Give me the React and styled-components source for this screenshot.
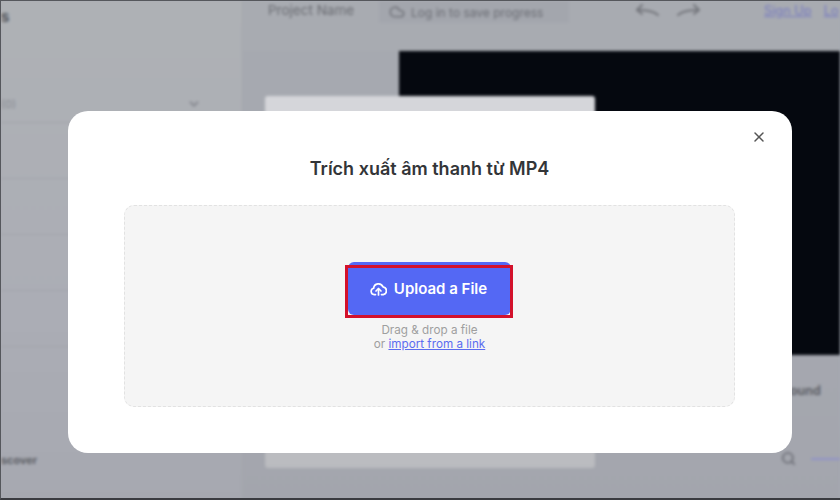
import React from 'react'
import styled, { createGlobalStyle } from 'styled-components'
import { ChevronDown, Cloud, Search, X } from 'lucide-react'

const GlobalStyle = createGlobalStyle`
  html, body { margin: 0; padding: 0; background: #000; }
  * { box-sizing: border-box; }
  body { font-family: Inter, "Liberation Sans", sans-serif; }
`

const Frame = styled.div`
  position: relative;
  width: 840px;
  height: 500px;
  overflow: hidden;
  background: #a7aab2;

  &::after {
    content: '';
    position: absolute;
    inset: 0;
    border-top: 1px solid #55575c;
    border-left: 1px solid #55575c;
    border-bottom: 2px solid #3a3b40;
    pointer-events: none;
  }
`

const Backdrop = styled.div`
  display: flex;
  width: 100%;
  height: 100%;
  filter: blur(1.4px);
`

const Sidebar = styled.aside`
  width: 243px;
  flex: none;
  display: flex;
  flex-direction: column;
  padding-left: 1px;
  background: linear-gradient(#aeb1b5, #abadb5 60%, #a6a8b0);
  border-right: 1px solid #a3a6ac;
`

const SideTitle = styled.div`
  height: 85px;
  padding-top: 7px;
  font-size: 15px;
  font-weight: 700;
  color: #55585e;
`

const SideSelect = styled.div`
  height: 38px;
  display: flex;
  align-items: center;
  justify-content: space-between;
  padding-right: 41px;
  font-size: 11px;
  color: #888b92;
  border-bottom: 1px solid #a0a3a9;
`

const SideRow = styled.div`
  height: 56px;
  border-bottom: 1px solid #a1a3aa;
`

const SideFoot = styled.div`
  margin-top: 106px;
  font-size: 11px;
  font-weight: 600;
  color: #54565c;
  white-space: nowrap;
  overflow: hidden;
`

const Main = styled.main`
  flex: 1;
  display: flex;
  flex-direction: column;
  min-width: 0;
`

const TopBar = styled.header`
  height: 51px;
  flex: none;
  display: flex;
  align-items: flex-start;
  padding: 1px 0 0 25px;
  background: #a8abb1;
  overflow: hidden;
`

const ProjectName = styled.span`
  width: 111px;
  flex: none;
  font-size: 13.5px;
  line-height: 19px;
  color: #686a70;
`

const SaveChip = styled.span`
  width: 190px;
  height: 22px;
  flex: none;
  display: flex;
  align-items: center;
  gap: 6px;
  padding-left: 10px;
  font-size: 12px;
  color: #6a6c73;
  background: #a3a6ad;
  white-space: nowrap;
`

const History = styled.div`
  display: flex;
  gap: 18px;
  margin-left: 66px;
  margin-top: 3px;
  color: #74767c;
`

const AuthLink = styled.a`
  margin-left: ${({ $gap }) => $gap}px;
  font-size: 12.8px;
  line-height: 20px;
  color: #7478c0;
  text-decoration: underline;
  white-space: nowrap;
`

const Stage = styled.section`
  position: relative;
  flex: 1;
  display: flex;
  flex-direction: column;
  align-items: flex-end;
  background: linear-gradient(#a6a9b0 40%, #a3a5ad);
`

const Video = styled.div`
  width: 441px;
  height: 304px;
  flex: none;
  background: #05080f;
`

const StageCard = styled.div`
  position: absolute;
  left: 22px;
  top: 45px;
  width: 330px;
  height: 372px;
  border-radius: 3px;
  background: linear-gradient(#d5d6da 0%, #d0d1d5 30%, #babbbf 100%);
`

const SoundRow = styled.div`
  width: 50px;
  margin-top: 28px;
  font-size: 12.5px;
  font-weight: 600;
  color: #56585e;
`

const ZoomRow = styled.div`
  width: 59px;
  margin-top: 53px;
  display: flex;
  align-items: center;
  gap: 15px;
  color: #6e7078;
`

const ZoomTrack = styled.div`
  flex: 1;
  height: 2px;
  background: #8f92c8;
`

const Overlay = styled.div`
  position: absolute;
  inset: 0;
  padding: 111px 48px 47px 68px;
`

const Modal = styled.div`
  position: relative;
  height: 100%;
  padding: 47px 57px 46px 56px;
  display: flex;
  flex-direction: column;
  background: #fff;
  border-radius: 20px;
`

const CloseButton = styled.button`
  position: absolute;
  top: 16px;
  right: 23px;
  width: 20px;
  height: 20px;
  padding: 0;
  display: flex;
  align-items: center;
  justify-content: center;
  border: 0;
  background: none;
  color: #555;
`

const Title = styled.h2`
  margin: 0 0 25px;
  text-align: center;
  font-size: 18px;
  line-height: 22px;
  font-weight: 600;
  color: #333538;
`

const DropZone = styled.div`
  flex: 1;
  display: flex;
  flex-direction: column;
  align-items: center;
  padding-top: 56px;
  background: #f5f5f5;
  border: 1px dashed #e2e2e2;
  border-radius: 10px;
`

const UploadWrap = styled.div`
  position: relative;
  margin-bottom: 8px;
`

const UploadButton = styled.button`
  width: 163px;
  height: 53px;
  padding: 0 2px 1px 0;
  display: flex;
  align-items: center;
  justify-content: center;
  gap: 7px;
  border: 0;
  border-radius: 6px;
  background: #5468f4;
  color: #fff;
  font-family: inherit;
  font-size: 15px;
  font-weight: 600;
`

const Highlight = styled.div`
  position: absolute;
  left: -3px;
  right: -2px;
  top: 3px;
  bottom: -3px;
  border: 3px solid #d3112b;
  pointer-events: none;
`

const Hint = styled.p`
  margin: 0;
  text-align: center;
  font-size: 11.7px;
  line-height: 14px;
  color: #9f9f9f;
`

const HintLink = styled.a`
  color: #5b6cf0;
  text-decoration: underline;
`

const UndoIcon = () => (
  <svg width="24" height="14" viewBox="0 0 24 14" fill="none" stroke="currentColor" strokeWidth="2" strokeLinecap="round" strokeLinejoin="round">
    <path d="M23 11C19 7 12 6 2 6" />
    <path d="M7 1 2 6l5 4" />
  </svg>
)

const RedoIcon = () => (
  <svg width="24" height="14" viewBox="0 0 24 14" fill="none" stroke="currentColor" strokeWidth="2" strokeLinecap="round" strokeLinejoin="round">
    <path d="M1 11C5 7 12 6 22 6" />
    <path d="M17 1l5 5-5 4" />
  </svg>
)

const UploadCloud = () => (
  <svg width="17" height="15" viewBox="0 0 17 15" fill="none" stroke="currentColor" strokeWidth="1.7" strokeLinecap="round" strokeLinejoin="round">
    <path d="M5.5 13.6H4.2A3.2 3.2 0 0 1 3.6 7.3 4.9 4.9 0 0 1 13 5.9a3.9 3.9 0 0 1 .3 7.7h-1.8" />
    <path d="M8.5 14V8" />
    <path d="M6 10l2.5-2.5L11 10" />
  </svg>
)

const App = () => {
  return (
    <Frame>
      <GlobalStyle />
      <Backdrop>
        <Sidebar>
          <SideTitle>s</SideTitle>
          <SideSelect>
            <span>(0)</span>
            <ChevronDown size={14} strokeWidth={3.5} />
          </SideSelect>
          <SideRow />
          <SideRow />
          <SideRow />
          <SideRow />
          <SideFoot>scover</SideFoot>
        </Sidebar>
        <Main>
          <TopBar>
            <ProjectName>Project Name</ProjectName>
            <SaveChip>
              <Cloud size={16} />
              Log in to save progress
            </SaveChip>
            <History>
              <UndoIcon />
              <RedoIcon />
            </History>
            <AuthLink $gap={63}>Sign Up</AuthLink>
            <AuthLink $gap={12}>Lo</AuthLink>
          </TopBar>
          <Stage>
            <Video />
            <StageCard />
            <SoundRow>ound</SoundRow>
            <ZoomRow>
              <Search size={15} strokeWidth={3} />
              <ZoomTrack />
            </ZoomRow>
          </Stage>
        </Main>
      </Backdrop>
      <Overlay>
        <Modal>
          <CloseButton aria-label="Close">
            <X size={16} strokeWidth={2.2} />
          </CloseButton>
          <Title>Trích xuất âm thanh từ MP4</Title>
          <DropZone>
            <UploadWrap>
              <UploadButton>
                <UploadCloud />
                Upload a File
              </UploadButton>
              <Highlight />
            </UploadWrap>
            <Hint>
              Drag &amp; drop a file
              <br />
              or <HintLink href="#">import from a link</HintLink>
            </Hint>
          </DropZone>
        </Modal>
      </Overlay>
    </Frame>
  )
}

export default App
